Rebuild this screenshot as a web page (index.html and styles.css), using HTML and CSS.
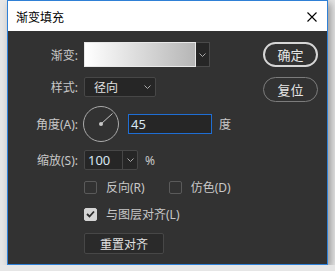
FILE: index.html
```html
<!DOCTYPE html>
<html lang="zh-CN">
<head>
    <meta charset="UTF-8">
    <meta name="viewport" content="width=device-width, initial-scale=1.0">
    <title>渐变填充</title>
    <link rel="stylesheet" href="styles.css">
</head>
<body>
    <div class="dialog">
        <div class="titlebar">
            <span class="title">渐变填充</span>
            <svg class="close" width="10" height="10" viewBox="0 0 10 10">
                <path d="M0.5 0.5 L9.5 9.5 M9.5 0.5 L0.5 9.5" stroke="#000" stroke-width="1.1" fill="none"/>
            </svg>
        </div>
        <div class="body">
            <div class="form">
                <div class="row row-gradient">
                    <label class="label">渐变:</label>
                    <div class="gradient-picker">
                        <div class="swatch"></div>
                        <div class="drop">
                            <svg width="7" height="4" viewBox="0 0 7 4"><path d="M0.5 0.5 L3.5 3.5 L6.5 0.5" stroke="#aaa" fill="none"/></svg>
                        </div>
                    </div>
                </div>
                <div class="row row-style">
                    <label class="label">样式:</label>
                    <div class="select">
                        <span>径向</span>
                        <svg width="7" height="4" viewBox="0 0 7 4"><path d="M0.5 0.5 L3.5 3.5 L6.5 0.5" stroke="#aaa" fill="none"/></svg>
                    </div>
                </div>
                <div class="row row-angle">
                    <label class="label">角度(A):</label>
                    <svg class="dial" width="37" height="38" viewBox="0 0 37 38">
                        <circle cx="18" cy="19" r="17.5" stroke="#aaa" stroke-width="1" fill="none"/>
                        <line x1="18" y1="19" x2="29.5" y2="8.5" stroke="#c4c4c4" stroke-width="1"/>
                        <circle cx="18" cy="19" r="2" fill="#c8c8c8"/>
                    </svg>
                    <div class="input focused">45</div>
                    <span class="unit">度</span>
                </div>
                <div class="row row-scale">
                    <label class="label">缩放(S):</label>
                    <div class="combo">
                        <span class="combo-value">100</span>
                        <span class="combo-drop">
                            <svg width="7" height="4" viewBox="0 0 7 4"><path d="M0.5 0.5 L3.5 3.5 L6.5 0.5" stroke="#aaa" fill="none"/></svg>
                        </span>
                    </div>
                    <span class="unit">%</span>
                </div>
                <div class="row row-checks">
                    <span class="label"></span>
                    <div class="check"><span class="box"></span>反向(R)</div>
                    <div class="check check-dither"><span class="box"></span>仿色(D)</div>
                </div>
                <div class="row row-align">
                    <span class="label"></span>
                    <div class="check"><span class="box checked">
                        <svg width="9" height="8" viewBox="0 0 9 8"><path d="M1 4 L3.5 6.5 L8 1.5" stroke="#2a2a2a" stroke-width="1.8" fill="none"/></svg>
                    </span>与图层对齐(L)</div>
                </div>
                <div class="row row-reset">
                    <span class="label"></span>
                    <button class="flat-btn">重置对齐</button>
                </div>
            </div>
            <div class="actions">
                <button class="pill-btn primary">确定</button>
                <button class="pill-btn">复位</button>
            </div>
        </div>
    </div>
</body>
</html>
```

FILE: styles.css
```css
* {
    box-sizing: border-box;
}
body {
    margin: 0;
    background: #e6e6e6;
    font-family: "Noto Sans", "Noto Sans CJK SC", sans-serif;
    font-size: 12px;
}
.dialog {
    margin-left: 7px;
    width: 321px;
    height: 265px;
    border: 1px solid #2f80d6;
    background: #323232;
    box-shadow: 3px 3px 8px rgba(0, 0, 0, 0.35);
}
.titlebar {
    height: 30px;
    background: #fff;
    display: flex;
    align-items: center;
    justify-content: space-between;
    padding: 0 10px 0 8px;
}
.title {
    color: #000;
    font-family: "Noto Sans CJK SC", sans-serif;
    font-size: 12px;
}
.close {
    margin-top: 1px;
}
.body {
    display: flex;
    padding-top: 11px;
}
.form {
    display: flex;
    flex-direction: column;
    color: #c8c8c8;
}
.row {
    display: flex;
    align-items: center;
}
.label {
    width: 70px;
    margin-right: 6px;
    text-align: right;
    flex-shrink: 0;
}
.row-gradient {
    height: 25px;
}
.row-style {
    height: 20px;
    margin-top: 10px;
}
.row-angle {
    height: 38px;
    margin-top: 8px;
}
.row-scale {
    height: 20px;
    margin-top: 7px;
}
.row-checks {
    height: 14px;
    margin-top: 10px;
}
.row-align {
    height: 14px;
    margin-top: 13px;
}
.row-reset {
    height: 21px;
    margin-top: 12px;
}
.gradient-picker {
    display: flex;
    width: 126px;
    height: 25px;
}
.swatch {
    flex: 1;
    border: 1px solid #e8e8e8;
    background: linear-gradient(to right, #ffffff, #b6b6b6);
}
.drop {
    width: 14px;
    background: #262626;
    border: 1px solid #4a4a4a;
    border-left: none;
    display: flex;
    align-items: center;
    justify-content: center;
}
.select {
    width: 72px;
    height: 20px;
    border: 1px solid #474747;
    border-radius: 2px;
    background: #262626;
    display: flex;
    align-items: center;
    justify-content: space-between;
    padding: 0 4px 0 9px;
    color: #e0e0e0;
}
.dial {
    margin-left: -1px;
}
.input {
    margin-left: 8px;
    width: 84px;
    height: 20px;
    line-height: 18px;
    padding-left: 2px;
    background: #262626;
    border: 1px solid #3a3a3a;
    color: #d8e6f2;
    font-size: 13px;
}
.input.focused {
    border-color: #1f6ed4;
}
.unit {
    margin-left: 7px;
}
.combo {
    display: flex;
    width: 54px;
    height: 20px;
    border: 1px solid #474747;
    border-radius: 2px;
    background: #262626;
}
.combo-value {
    flex: 1;
    padding-left: 3px;
    line-height: 18px;
    color: #d8e6f2;
    font-size: 13px;
}
.combo-drop {
    width: 15px;
    border-left: 1px solid #474747;
    display: flex;
    align-items: center;
    justify-content: center;
}
.check {
    display: flex;
    align-items: center;
    color: #c8c8c8;
}
.box {
    width: 13px;
    height: 13px;
    border: 1px solid #5a5a5a;
    border-radius: 2px;
    margin-right: 9px;
    display: flex;
    align-items: center;
    justify-content: center;
}
.box.checked {
    background: #d4d4d4;
    border-color: #d4d4d4;
}
.check-dither {
    margin-left: 24px;
}
.flat-btn {
    width: 80px;
    height: 21px;
    padding: 0;
    background: #2a2a2a;
    border: 1px solid #474747;
    border-radius: 2px;
    color: #e0e0e0;
    font-family: "Noto Sans CJK SC", sans-serif;
    font-size: 12px;
}
.actions {
    margin-left: auto;
    margin-right: 9px;
    display: flex;
    flex-direction: column;
    gap: 10px;
}
.pill-btn {
    width: 55px;
    height: 25px;
    padding: 0;
    background: #323232;
    border: 1px solid #7c7c7c;
    border-radius: 13px;
    color: #e6e6e6;
    font-family: "Noto Sans CJK SC", sans-serif;
    font-size: 13px;
}
.pill-btn.primary {
    border: 2px solid #d6d6d6;
}
```
